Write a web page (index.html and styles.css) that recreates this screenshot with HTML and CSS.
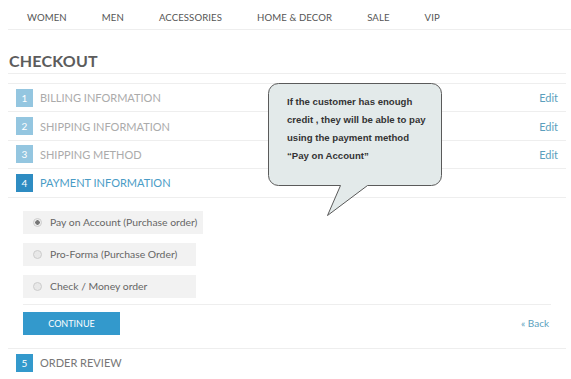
FILE: index.html
```html
<!DOCTYPE html>
<html>
<head>
  <title>Checkout</title>
  <link rel="stylesheet" href="styles.css">
</head>
<body>
  <div class="nav">
    <a>WOMEN</a>
    <a>MEN</a>
    <a>ACCESSORIES</a>
    <a>HOME &amp; DECOR</a>
    <a>SALE</a>
    <a>VIP</a>
  </div>

  <div class="page">
    <h1>CHECKOUT</h1>

    <div class="steps">
      <div class="step done">
        <span class="num">1</span><span class="label">BILLING INFORMATION</span><a class="edit">Edit</a>
      </div>
      <div class="step done">
        <span class="num">2</span><span class="label">SHIPPING INFORMATION</span><a class="edit">Edit</a>
      </div>
      <div class="step done">
        <span class="num">3</span><span class="label">SHIPPING METHOD</span><a class="edit">Edit</a>
      </div>
      <div class="step active">
        <span class="num">4</span><span class="label">PAYMENT INFORMATION</span>
      </div>

      <div class="payment">
        <label class="option"><span class="radio checked"></span>Pay on Account (Purchase order)</label>
        <label class="option"><span class="radio"></span>Pro-Forma (Purchase Order)</label>
        <label class="option"><span class="radio"></span>Check / Money order</label>

        <div class="actions">
          <button>CONTINUE</button>
          <a class="back">« Back</a>
        </div>
      </div>

      <div class="step last">
        <span class="num">5</span><span class="label">ORDER REVIEW</span>
      </div>
    </div>

    <div class="callout">
      <svg class="bubble" width="180" height="136" viewBox="0 0 180 136">
        <path d="M10.5 0.5 H163.5 A10 10 0 0 1 173.5 10.5 V92.5 A10 10 0 0 1 163.5 102.5 H99.5 L59.5 132.5 L72.5 102.5 H10.5 A10 10 0 0 1 0.5 92.5 V10.5 A10 10 0 0 1 10.5 0.5 Z" fill="#e3eaea" stroke="#5a5a5a" stroke-width="1"/>
      </svg>
      <p>If the customer has enough<br>credit , they will be able to pay<br>using the payment method<br>“Pay on Account”</p>
    </div>
  </div>
</body>
</html>
```

FILE: styles.css
```css
body {
  margin: 0;
  font-family: "Lato", "Liberation Sans", sans-serif;
  color: #777;
  background: white;
}

.nav {
  display: flex;
  margin-left: 8px;
  padding: 12px 0 0 19px;
  height: 17px;
  border-bottom: 1px solid #eee;
  font-size: 9.6px;
  color: #555;
  letter-spacing: 0.1px;
}
.nav a { margin-right: 35px; }

.page {
  position: relative;
  margin: 0 5px 0 8px;
}

h1 {
  margin: 0;
  padding: 21px 0 3px 1px;
  font-size: 16px;
  font-weight: 700;
  color: #5c5c5c;
  border-bottom: 1px solid #eee;
  letter-spacing: 0.2px;
}

.steps { margin-top: 9px; }

.step {
  display: flex;
  align-items: center;
  height: 27.4px;
  border-top: 1px solid #eee;
  font-size: 11px;
}
.num {
  width: 17px;
  height: 18px;
  margin: 0 7px 0 8px;
  display: flex;
  align-items: center;
  justify-content: center;
  font-size: 10px;
  color: white;
  background: #94c6e0;
}
.label { flex: 1; color: #ababab; }
.edit { color: #5b9fbd; font-size: 11px; margin-right: 8px; }

.active .num { background: #2e8cc2; }
.active .label { color: #4a9cc6; }

.last { padding-top: 5px; height: 22px; align-items: flex-start; }
.last .num { background: #3399cc; }
.last .label { color: #777; line-height: 18px; }

.payment {
  border-top: 1px solid #eee;
  padding: 13px 15px 13px 15px;
}
.option {
  display: flex;
  align-items: center;
  width: fit-content;
  min-width: 157px;
  height: 23px;
  margin-bottom: 9px;
  padding: 0 6px 0 10px;
  background: #f2f2f2;
  font-size: 10.4px;
  color: #666;
}
.radio {
  width: 7px;
  height: 7px;
  margin-right: 8px;
  border: 1px solid #ccc;
  border-radius: 50%;
  background: #e8e8e8;
}
.radio.checked {
  background: radial-gradient(circle, #777 0 2px, #eee 2.5px);
}

.actions {
  display: flex;
  align-items: center;
  justify-content: space-between;
  margin-top: -3px;
  padding-top: 7px;
  border-top: 1px solid #eee;
}
button {
  width: 97px;
  height: 23px;
  border: none;
  background: #3399cc;
  color: white;
  font-family: inherit;
  font-size: 9px;
  padding: 0;
}
.back {
  font-size: 10px;
  color: #5b9fbd;
  margin-right: 2px;
}

.callout {
  position: absolute;
  left: 260px;
  top: 53px;
  width: 174px;
  height: 134px;
}
.bubble { position: absolute; left: 0; top: 0; }
.callout p {
  position: relative;
  margin: 0;
  padding: 10px 6px 0 19px;
  font-family: "Liberation Sans", Arial, sans-serif;
  font-weight: 700;
  font-size: 9.6px;
  line-height: 18px;
  color: #333;
}
```
